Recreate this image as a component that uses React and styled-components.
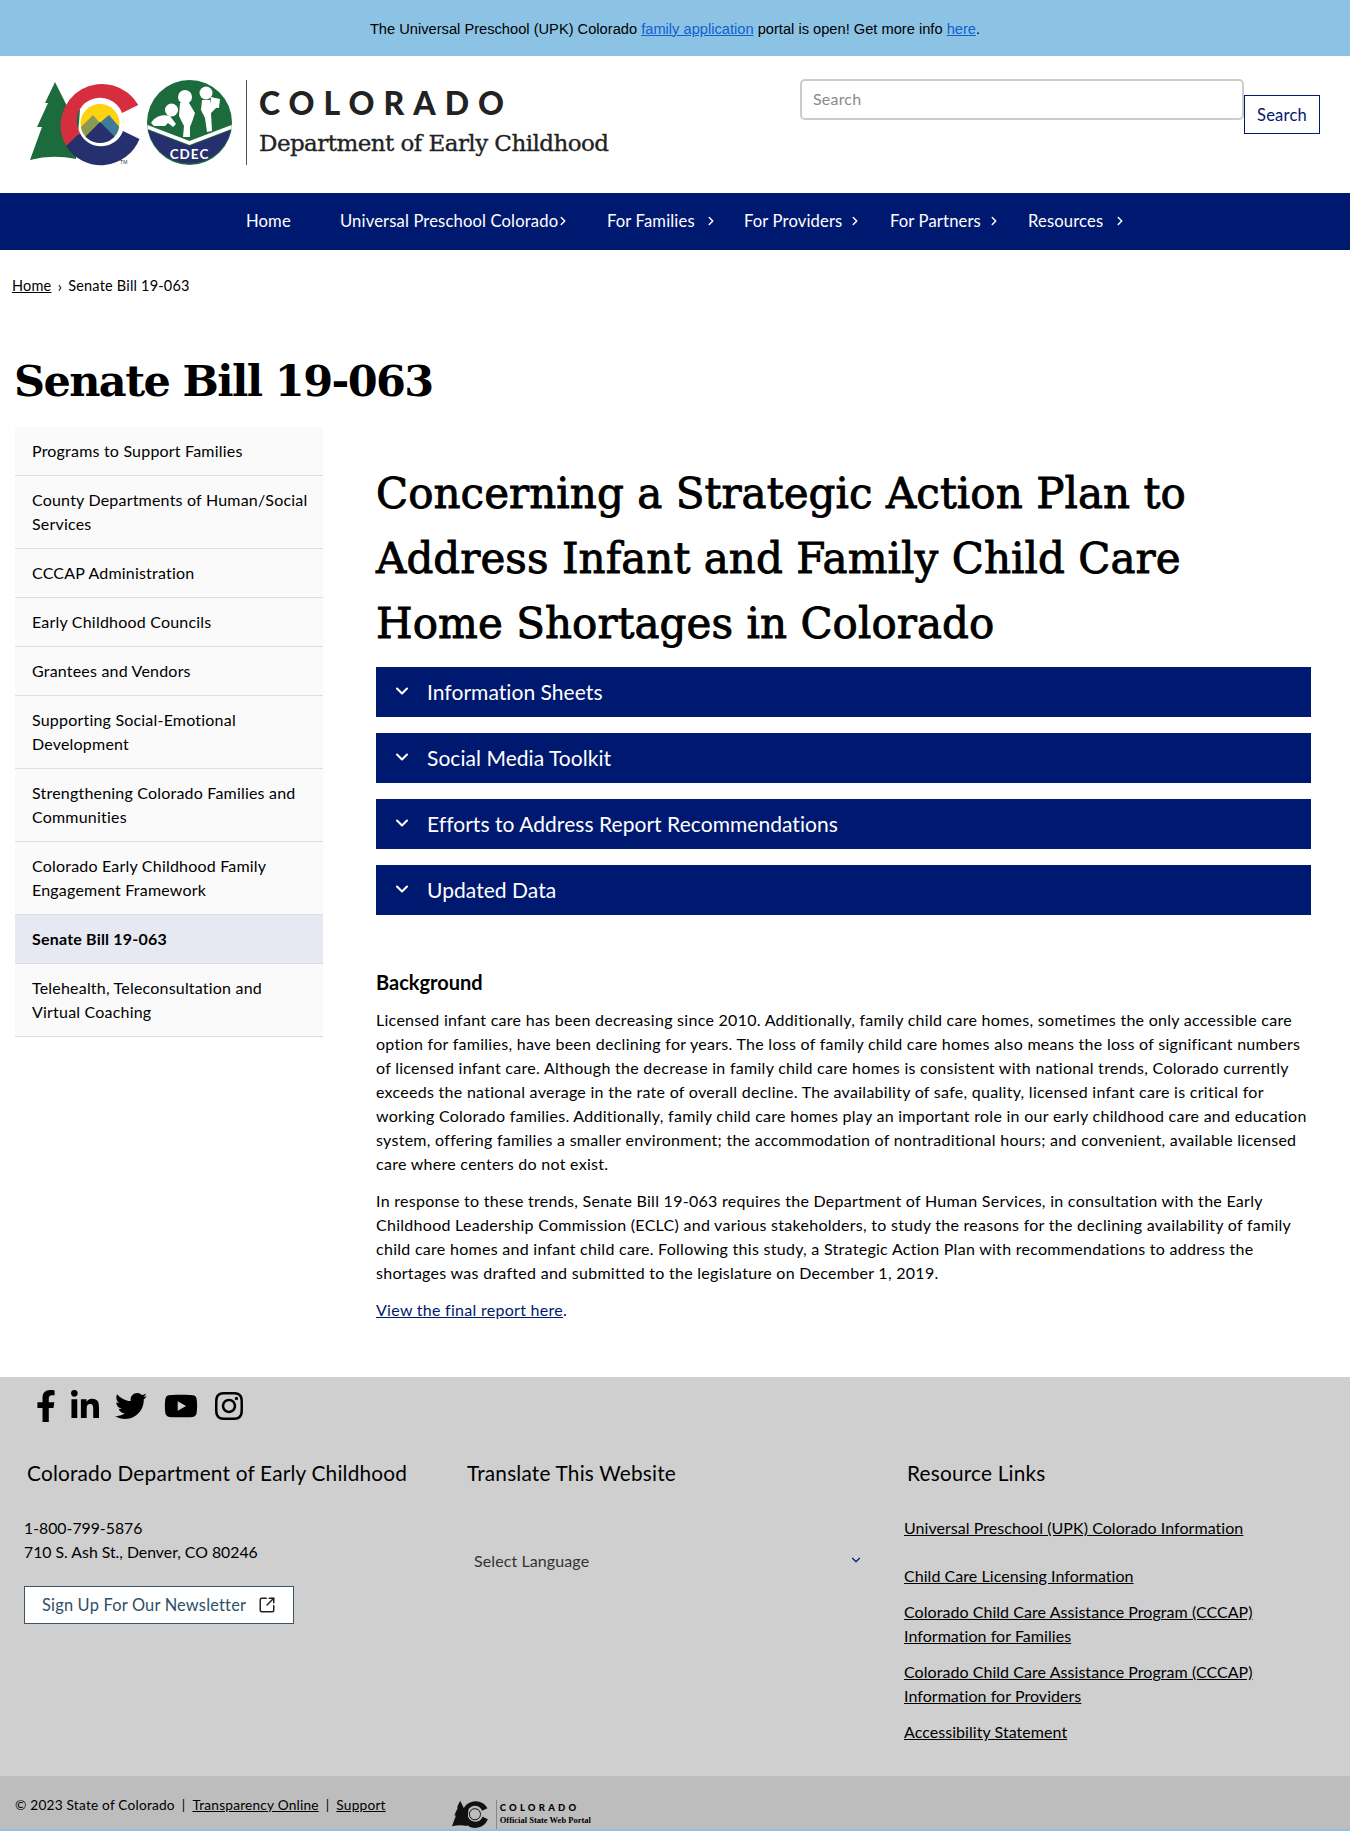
import React from 'react';
import styled, { createGlobalStyle } from 'styled-components';
import { FaFacebookF, FaLinkedinIn, FaTwitter, FaYoutube, FaInstagram } from 'react-icons/fa';
import { ChevronDown, ChevronRight, SquareArrowOutUpRight } from 'lucide-react';

const navy = '#001970';
const bodyFont = `"Lato", "Open Sans", sans-serif`;
const slabFont = `"DejaVu Serif", "Liberation Serif", serif`;

const GlobalStyle = createGlobalStyle`
  html, body { margin: 0; padding: 0; background: #fff; }
  body { font-family: ${bodyFont}; font-size: 16px; letter-spacing: 0.2px; color: #000; }
  * { box-sizing: border-box; }
`;

const AlertBar = styled.div`
  height: 56px;
  padding-top: 1px;
  background: #8cc3e5;
  display: flex;
  align-items: center;
  justify-content: center;
  font-family: "Liberation Sans", Arial, sans-serif;
  font-size: 14.67px;
  letter-spacing: 0;
  a { color: #0f5fd0; }
`;

const Header = styled.header`
  height: 137px;
  display: flex;
  justify-content: space-between;
  padding: 23px 30px 0 30px;
`;

const Brand = styled.div`
  display: flex;
  align-items: flex-start;
  margin-top: 1px;
`;

const BrandRule = styled.div`
  width: 1px;
  height: 85px;
  margin: 0 12px 0 13px;
  background: #555;
`;

const BrandText = styled.div`
  display: flex;
  flex-direction: column;
  color: #222;
`;

const BrandTitle = styled.div`
  font-family: "Lato", sans-serif;
  font-weight: 900;
  font-size: 32px;
  letter-spacing: 9px;
  line-height: 40px;
  margin-top: 3px;
`;

const BrandSub = styled.div`
  font-family: ${slabFont};
  font-size: 23px;
  line-height: 30px;
  margin-top: 5px;
  letter-spacing: -0.55px;
  -webkit-text-stroke: 0.35px #222;
`;

const SearchForm = styled.form`
  display: flex;
  align-items: flex-start;
`;

const SearchInput = styled.input`
  width: 444px;
  height: 41px;
  border: 2px solid #ccc;
  border-radius: 5px;
  padding: 0 11px 2px;
  font-family: ${bodyFont};
  font-size: 16px;
  letter-spacing: 0.2px;
  &::placeholder { color: #8a8a8a; }
`;

const SearchButton = styled.button`
  width: 76px;
  height: 39px;
  margin-top: 16px;
  background: #fff;
  border: 1px solid ${navy};
  color: ${navy};
  font-family: ${bodyFont};
  font-size: 16.5px;
  letter-spacing: 0.2px;
`;

const Nav = styled.nav`
  height: 57px;
  padding-bottom: 2px;
  background: ${navy};
  display: flex;
  align-items: center;
  padding-left: 246px;
  color: #fff;
`;

const NavItem = styled.a`
  display: flex;
  align-items: center;
  width: ${p => p.$w}px;
  font-size: 16.6px;
  letter-spacing: 0.15px;
  white-space: nowrap;
  svg { margin-left: ${p => p.$gap}px; flex: none; }
`;

const Crumbs = styled.div`
  padding: 24px 12px 0;
  font-size: 14.5px;
  line-height: 24px;
  display: flex;
  align-items: center;
  a { color: #000; text-decoration: underline; }
  span { margin: 0 6px; font-size: 16px; }
`;

const PageTitle = styled.h1`
  margin: 53px 0 0 14px;
  font-family: ${slabFont};
  font-size: 43px;
  letter-spacing: -1.6px;
  line-height: 60px;
  font-weight: 700;
`;

const Columns = styled.div`
  display: flex;
  padding-left: 15px;
  margin-top: 16px;
`;

const SideNav = styled.ul`
  list-style: none;
  margin: 0;
  padding: 0;
  width: 308px;
  flex: none;
  align-self: flex-start;
`;

const SideItem = styled.li`
  padding: 12px 10px 12px 17px;
  line-height: 24px;
  background: ${p => (p.$active ? '#e6e9f1' : '#fafafa')};
  font-weight: ${p => (p.$active ? 700 : 400)};
  border-bottom: 1px solid #ddd;
`;

const Main = styled.main`
  margin-left: 53px;
  width: 935px;
`;

const Subtitle = styled.h2`
  margin: 34px 0 0;
  font-family: ${slabFont};
  font-size: 42px;
  line-height: 65px;
  font-weight: 400;
  letter-spacing: 0.05px;
  -webkit-text-stroke: 0.9px #000;
`;

const Accordion = styled.div`
  margin-top: 11px;
  display: flex;
  flex-direction: column;
  gap: 16px;
`;

const AccordionBar = styled.div`
  height: 50px;
  padding: 0 0 2px 16px;
  background: ${navy};
  color: #fff;
  display: flex;
  align-items: center;
  font-size: 21px;
  letter-spacing: 0.05px;
  svg { margin-right: 15px; }
`;

const SectionTitle = styled.h3`
  margin: 54px 0 0;
  font-size: 20px;
  line-height: 26px;
  font-weight: 700;
  letter-spacing: 0;
`;

const Para = styled.p`
  margin: 13px 0 0;
  line-height: 24px;
  letter-spacing: 0.28px;
  a { color: ${navy}; }
`;

const Footer = styled.footer`
  margin-top: 55px;
  background: #cfcfcf;
  height: 399px;
  padding-top: 11px;
`;

const Socials = styled.div`
  display: flex;
  align-items: center;
  padding-left: 36px;
  gap: 16px;
  height: 36px;
`;

const SocialSlot = styled.a`
  width: ${p => p.$w}px;
  display: flex;
  justify-content: center;
  color: #000;
  svg { flex: none; }
`;

const FooterCols = styled.div`
  display: grid;
  grid-template-columns: 467px 437px 1fr;
  margin-top: 35px;
`;

const FooterCol = styled.div`
  padding-left: ${p => p.$pad}px;
`;

const FooterHeading = styled.div`
  font-size: 20.8px;
  letter-spacing: 0.2px;
  line-height: 28px;
  margin-left: ${p => p.$shift ?? 0}px;
`;

const FooterText = styled.div`
  margin-top: 29px;
  font-size: 15.8px;
  letter-spacing: 0;
  line-height: 24px;
`;

const NewsButton = styled.a`
  margin-top: 22px;
  width: 270px;
  height: 38px;
  display: flex;
  align-items: center;
  padding: 0 0 1px 17px;
  background: #fff;
  border: 1px solid #3d5566;
  color: #2c5068;
  font-size: 16.4px;
  svg { margin-left: 12px; color: #222; }
`;

const LanguageSelect = styled.div`
  margin-top: 55px;
  width: 396px;
  height: 36px;
  padding-left: 7px;
  display: flex;
  align-items: center;
  justify-content: space-between;
  color: #333;
  letter-spacing: 0.1px;
  svg { color: ${navy}; }
`;

const ResourceList = styled.div`
  margin-top: 29px;
  display: flex;
  flex-direction: column;
  gap: 12px;
`;

const ResourceLink = styled.a`
  line-height: 24px;
  color: #000;
  letter-spacing: 0.05px;
  text-decoration: underline;
  margin-bottom: ${p => p.$gap ?? 0}px;
`;

const BottomBar = styled.div`
  height: 55px;
  background: #bdbdbd;
  display: flex;
  padding: 17px 0 0 15px;
  font-size: 13.7px;
  line-height: 24px;
  border-bottom: 2px solid #8cc3e5;
  a { color: #000; text-decoration: underline; }
  i { font-style: normal; margin: 0 7px; }
`;

const PortalMark = styled.div`
  margin-left: 66px;
  margin-top: 7px;
  display: flex;
  align-items: flex-start;
  overflow: hidden;
  height: 29px;
`;

const PortalText = styled.div`
  margin-left: 6px;
  padding-left: 3px;
  border-left: 1px solid #888;
  height: 30px;
`;

const PortalTitle = styled.div`
  font-weight: 900;
  font-size: 9.5px;
  letter-spacing: 3.2px;
  line-height: 15px;
`;

const PortalSub = styled.div`
  font-family: "Liberation Serif", serif;
  font-size: 8.5px;
  letter-spacing: 0;
  line-height: 11px;
  font-weight: 700;
`;

function ColoradoMark({ size = 116, mono = false }) {
  const green = mono ? '#111' : '#1c6b3d';
  const red = mono ? '#111' : '#d62e3e';
  const blue = mono ? '#111' : '#27306e';
  const clipId = mono ? 'peaks-mono' : 'peaks';
  return (
    <svg width={size} height={size * 0.75} viewBox="0 0 116 87" style={{ flex: 'none' }}>
      <clipPath id={clipId}><circle cx="70" cy="43.5" r="19.5" /></clipPath>
      <path d="M25 2 L15 23 L18 23 L7 47 L12 47 L0 80 Q 22 74 46 79 L50 30 L38 28 Z" fill={green} />
      <path d="M108.3 25 A41.5 41.5 0 1 0 36 66 L49.9 53 A23.4 23.4 0 1 1 92 33 Z" fill={red} />
      <path d="M36 66 A41.5 41.5 0 0 0 109.5 59 L93 51 A23.4 23.4 0 0 1 49.9 53 Z" fill={blue} />
      {mono ? (
        <circle cx="70" cy="43.5" r="17" fill="none" stroke="#111" strokeWidth="3" />
      ) : (
        <g clipPath={`url(#${clipId})`}>
          <rect x="48" y="22" width="44" height="44" fill="#fdd20e" />
          <path d="M48 50 L63 35 L76 50 L70 66 L48 66 Z" fill="#8b9a52" />
          <path d="M66 46 L79 35 L92 50 L92 66 L72 66 Z" fill="#3f7c9a" />
          <path d="M50 62 L70 42 L90 62 L90 70 L50 70 Z" fill={blue} />
        </g>
      )}
      {!mono && <text x="90" y="84" fontSize="5" fill="#333" fontFamily="Liberation Sans">TM</text>}
    </svg>
  );
}

function CdecMark() {
  return (
    <svg width="86" height="85" viewBox="0 0 86 85" style={{ flex: 'none', marginLeft: 1 }}>
      <circle cx="42.5" cy="42.5" r="42.5" fill="#1c6b3d" />
      <path d="M1 50 L42.5 66 L84 50 A42.5 42.5 0 0 1 1 50 Z" fill="#27306e" />
      <path d="M0.5 45 L42.5 61 L84.5 45 L84.5 49 L42.5 65 L0.5 49 Z" fill="#fff" />
      <g fill="#fff">
        <circle cx="24.5" cy="30" r="6.5" />
        <path d="M4 43 C8 36 16 34 23 36 L29 44 L26 47 L21 43 L18 46 L7 46 Z" />
        <circle cx="38" cy="17" r="7" />
        <path d="M33 23 L42 23 L48 33 L45 42 L43 47 L43 57 L36 57 L37 46 L32 36 Z" />
        <circle cx="59" cy="13" r="6.5" />
        <path d="M55 20 L63 20 L64 27 L70 27 L64 33 L65 51 L60 52 L58 38 L54 30 Z" />
        <path d="M64 17 L73 19 L72 28 L63 27 Z" />
      </g>
      <text x="42.5" y="79" textAnchor="middle" fill="#fff" fontSize="13.5" fontWeight="700" letterSpacing="1" fontFamily="Lato">CDEC</text>
    </svg>
  );
}

const sideLinks = [
  ['Programs to Support Families'],
  ['County Departments of Human/Social Services'],
  ['CCCAP Administration'],
  ['Early Childhood Councils'],
  ['Grantees and Vendors'],
  ['Supporting Social-Emotional Development'],
  ['Strengthening Colorado Families and Communities'],
  ['Colorado Early Childhood Family Engagement Framework'],
  ['Senate Bill 19-063', true],
  ['Telehealth, Teleconsultation and Virtual Coaching'],
];

const navLinks = [
  ['Universal Preschool Colorado', 267, -2],
  ['For Families', 137, 9],
  ['For Providers', 146, 6],
  ['For Partners', 138, 6],
  ['Resources', 120, 10],
];

const sections = ['Information Sheets', 'Social Media Toolkit', 'Efforts to Address Report Recommendations', 'Updated Data'];

export default function App() {
  return (
    <>
      <GlobalStyle />
      <AlertBar>
        <span>
          The Universal Preschool (UPK) Colorado <a href="#a">family application</a> portal is open! Get more info <a href="#b">here</a>.
        </span>
      </AlertBar>
      <Header>
        <Brand>
          <ColoradoMark />
          <CdecMark />
          <BrandRule />
          <BrandText>
            <BrandTitle>COLORADO</BrandTitle>
            <BrandSub>Department of Early Childhood</BrandSub>
          </BrandText>
        </Brand>
        <SearchForm>
          <SearchInput placeholder="Search" />
          <SearchButton type="button">Search</SearchButton>
        </SearchForm>
      </Header>
      <Nav>
        <NavItem $w={94} $gap={0}>Home</NavItem>
        {navLinks.map(([label, w, gap]) => (
          <NavItem key={label} $w={w} $gap={gap}>
            {label}
            <ChevronRight size={14} strokeWidth={2.5} />
          </NavItem>
        ))}
      </Nav>
      <Crumbs>
        <a href="#home">Home</a>
        <span>›</span>
        Senate Bill 19-063
      </Crumbs>
      <PageTitle>Senate Bill 19-063</PageTitle>
      <Columns>
        <SideNav>
          {sideLinks.map(([label, active]) => (
            <SideItem key={label} $active={active}>{label}</SideItem>
          ))}
        </SideNav>
        <Main>
          <Subtitle>Concerning a Strategic Action Plan to Address Infant and Family Child Care Home Shortages in Colorado</Subtitle>
          <Accordion>
            {sections.map(s => (
              <AccordionBar key={s}>
                <ChevronDown size={20} strokeWidth={2.5} />
                {s}
              </AccordionBar>
            ))}
          </Accordion>
          <SectionTitle>Background</SectionTitle>
          <Para>
            Licensed infant care has been decreasing since 2010. Additionally, family child care homes, sometimes the only accessible care option for families, have been declining for years. The loss of family child care homes also means the loss of significant numbers of licensed infant care. Although the decrease in family child care homes is consistent with national trends, Colorado currently exceeds the national average in the rate of overall decline. The availability of safe, quality, licensed infant care is critical for working Colorado families. Additionally, family child care homes play an important role in our early childhood care and education system, offering families a smaller environment; the accommodation of nontraditional hours; and convenient, available licensed care where centers do not exist.
          </Para>
          <Para>
            In response to these trends, Senate Bill 19-063 requires the Department of Human Services, in consultation with the Early Childhood Leadership Commission (ECLC) and various stakeholders, to study the reasons for the declining availability of family child care homes and infant child care. Following this study, a Strategic Action Plan with recommendations to address the shortages was drafted and submitted to the legislature on December 1, 2019.
          </Para>
          <Para>
            <a href="#report">View the final report here</a>.
          </Para>
        </Main>
      </Columns>
      <Footer>
        <Socials>
          <SocialSlot $w={19}><FaFacebookF size={32} /></SocialSlot>
          <SocialSlot $w={27}><FaLinkedinIn size={32} /></SocialSlot>
          <SocialSlot $w={33}><FaTwitter size={32} /></SocialSlot>
          <SocialSlot $w={36}><FaYoutube size={34} /></SocialSlot>
          <SocialSlot $w={28}><FaInstagram size={32} /></SocialSlot>
        </Socials>
        <FooterCols>
          <FooterCol $pad={24}>
            <FooterHeading $shift={3}>Colorado Department of Early Childhood</FooterHeading>
            <FooterText>
              1-800-799-5876<br />
              710 S. Ash St., Denver, CO 80246
            </FooterText>
            <NewsButton>
              Sign Up For Our Newsletter
              <SquareArrowOutUpRight size={18} />
            </NewsButton>
          </FooterCol>
          <FooterCol $pad={0}>
            <FooterHeading>Translate This Website</FooterHeading>
            <LanguageSelect>
              Select Language
              <ChevronDown size={14} />
            </LanguageSelect>
          </FooterCol>
          <FooterCol $pad={0}>
            <FooterHeading $shift={3}>Resource Links</FooterHeading>
            <ResourceList>
              <ResourceLink $gap={12}>Universal Preschool (UPK) Colorado Information</ResourceLink>
              <ResourceLink>Child Care Licensing Information</ResourceLink>
              <ResourceLink>Colorado Child Care Assistance Program (CCCAP)<br />Information for Families</ResourceLink>
              <ResourceLink>Colorado Child Care Assistance Program (CCCAP)<br />Information for Providers</ResourceLink>
              <ResourceLink>Accessibility Statement</ResourceLink>
            </ResourceList>
          </FooterCol>
        </FooterCols>
      </Footer>
      <BottomBar>
        © 2023 State of Colorado<i>|</i><a href="#t">Transparency Online</a><i>|</i><a href="#s">Support</a>
        <PortalMark>
          <ColoradoMark size={38} mono />
          <PortalText>
            <PortalTitle>COLORADO</PortalTitle>
            <PortalSub>Official State Web Portal</PortalSub>
          </PortalText>
        </PortalMark>
      </BottomBar>
    </>
  );
}
